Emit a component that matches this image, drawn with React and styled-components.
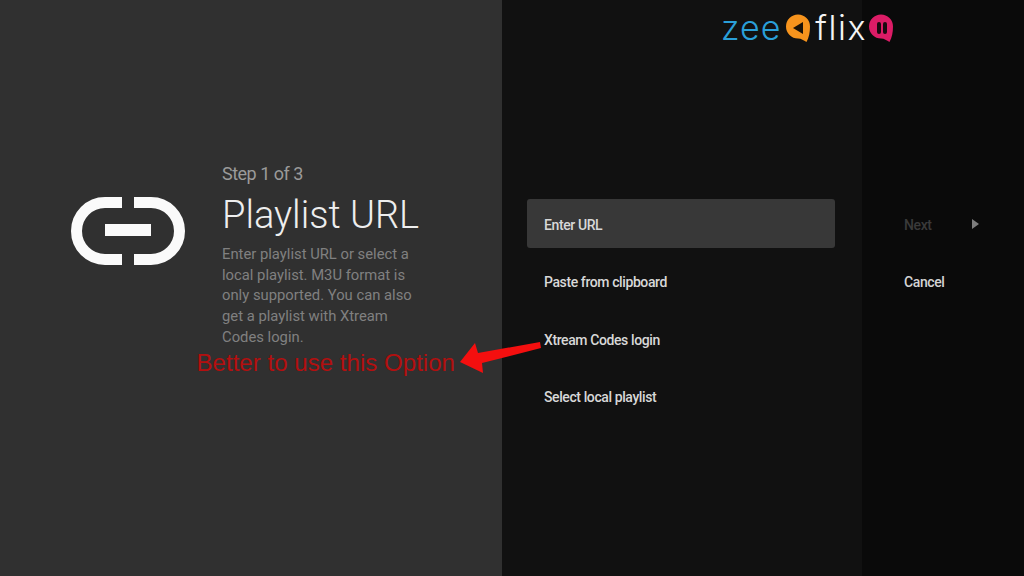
import styled, { createGlobalStyle } from 'styled-components';

const GlobalStyle = createGlobalStyle`
  html, body {
    margin: 0;
    padding: 0;
    background: #0a0a0a;
  }
  body {
    font-family: Roboto, "Liberation Sans", sans-serif;
  }
`;

const Screen = styled.div`
  position: relative;
  width: 1024px;
  height: 576px;
  overflow: hidden;
  display: grid;
  grid-template-columns: 502px 360px 162px;
`;

const Guidance = styled.section`
  background: #303030;
  display: flex;
  align-items: flex-start;
  padding: 163px 0 0 71px;
  gap: 37px;
`;

const LinkIcon = styled.svg`
  width: 114px;
  height: 70px;
  margin-top: 33px;
  flex-shrink: 0;
`;

const GuidanceText = styled.div`
  width: 205px;
`;

const Breadcrumb = styled.div`
  font-size: 18px;
  line-height: 21px;
  letter-spacing: -0.5px;
  color: #9a9a9a;
`;

const Title = styled.h1`
  margin: 9px 0 0;
  font-size: 38px;
  line-height: 44px;
  font-weight: 300;
  color: #eeeeee;
  white-space: nowrap;
`;

const Description = styled.p`
  margin: 7px 0 0;
  font-size: 14.8px;
  line-height: 20.7px;
  color: #808080;
`;

const Actions = styled.section`
  background: #111111;
  display: flex;
  flex-direction: column;
  padding: 199px 27px 0 25px;
  gap: 8.5px;
`;

const Action = styled.div`
  height: 49px;
  padding: 2px 0 0 17px;
  box-sizing: border-box;
  display: flex;
  align-items: center;
  border-radius: 3px;
  font-size: 14px;
  font-weight: 500;
  letter-spacing: -0.4px;
  color: #d8d8d8;
  background: ${(p) => (p.$active ? '#383838' : 'transparent')};
`;

const Buttons = styled.section`
  background: #0a0a0a;
  display: flex;
  flex-direction: column;
  padding: 199px 0 0 42px;
  gap: 8.5px;
`;

const ButtonRow = styled.div`
  height: 49px;
  width: 75px;
  padding-top: 2px;
  box-sizing: border-box;
  display: flex;
  align-items: center;
  justify-content: space-between;
  font-size: 14px;
  font-weight: 500;
  letter-spacing: -0.4px;
  color: ${(p) => (p.$disabled ? '#3a3a3a' : '#d4d4d4')};
`;

const Chevron = styled.span`
  width: 0;
  height: 0;
  margin-bottom: 2px;
  border-left: 7px solid #7d7d7d;
  border-top: 5.5px solid transparent;
  border-bottom: 5.5px solid transparent;
`;

const Note = styled.div`
  position: absolute;
  left: 196.5px;
  top: 349px;
  font-family: "Liberation Sans", Arial, sans-serif;
  font-size: 24.1px;
  line-height: 28px;
  color: #b30f0f;
  white-space: nowrap;
`;

const Arrow = styled.svg`
  position: absolute;
  left: 456px;
  top: 338px;
  width: 88px;
  height: 40px;
`;

const Logo = styled.div`
  position: absolute;
  left: 721px;
  top: 14px;
  height: 28px;
  display: flex;
  align-items: center;
  font-family: Inter, "Liberation Sans", sans-serif;
  font-size: 34px;
  font-weight: 300;
  line-height: 28px;
`;

const LogoBlue = styled.span`
  color: #2a9fd8;
  letter-spacing: 1px;
  margin-right: 5px;
`;

const LogoWhite = styled.span`
  color: #f4f4f4;
  letter-spacing: 1.5px;
  margin: 0 2px 0 5px;
`;

const LogoMark = styled.svg`
  width: 24px;
  height: 28px;
  flex-shrink: 0;
`;

const bubble = 'M12 .5a12 12 0 0 1 12 12c0 6-1 11-3.5 15.5c-3-1.5-5-3.5-8.5-3.5a12 12 0 0 1 0-24z';

const actions = ['Enter URL', 'Paste from clipboard', 'Xtream Codes login', 'Select local playlist'];

const App = () => (
  <Screen>
    <GlobalStyle />
    <Guidance>
      <LinkIcon viewBox="0 0 114 70">
        <path
          d="M51 6.5H34a28.5 28.5 0 0 0 0 57h17M63 6.5h17a28.5 28.5 0 0 1 0 57H63"
          fill="none"
          stroke="#fafafa"
          strokeWidth="11"
        />
        <rect x="34" y="28" width="46" height="12" fill="#fafafa" />
      </LinkIcon>
      <GuidanceText>
        <Breadcrumb>Step 1 of 3</Breadcrumb>
        <Title>Playlist URL</Title>
        <Description>
          Enter playlist URL or select a local playlist. M3U format is only supported. You can also get a
          playlist with Xtream Codes login.
        </Description>
      </GuidanceText>
    </Guidance>
    <Actions>
      {actions.map((label, i) => (
        <Action key={label} $active={i === 0}>
          {label}
        </Action>
      ))}
    </Actions>
    <Buttons>
      <ButtonRow $disabled>
        Next
        <Chevron />
      </ButtonRow>
      <ButtonRow>Cancel</ButtonRow>
    </Buttons>
    <Note>Better to use this Option</Note>
    <Arrow viewBox="0 0 88 40">
      <polygon points="4,24 19,5 22,15 84,4 85,10 26,25 27,35" fill="#f40f0f" />
    </Arrow>
    <Logo>
      <LogoBlue>zee</LogoBlue>
      <LogoMark viewBox="0 0 24 28">
        <path d={bubble} fill="#f7941d" />
        <path d="M7 14 L17 8 L17 20 Z" fill="#1a1208" />
      </LogoMark>
      <LogoWhite>flix</LogoWhite>
      <LogoMark viewBox="0 0 24 28">
        <path d={bubble} fill="#dc1c66" />
        <rect x="8" y="8" width="4" height="12" rx="2" fill="#1a0a10" />
        <rect x="14" y="8" width="4" height="12" rx="2" fill="#1a0a10" />
      </LogoMark>
    </Logo>
  </Screen>
);

export default App;
